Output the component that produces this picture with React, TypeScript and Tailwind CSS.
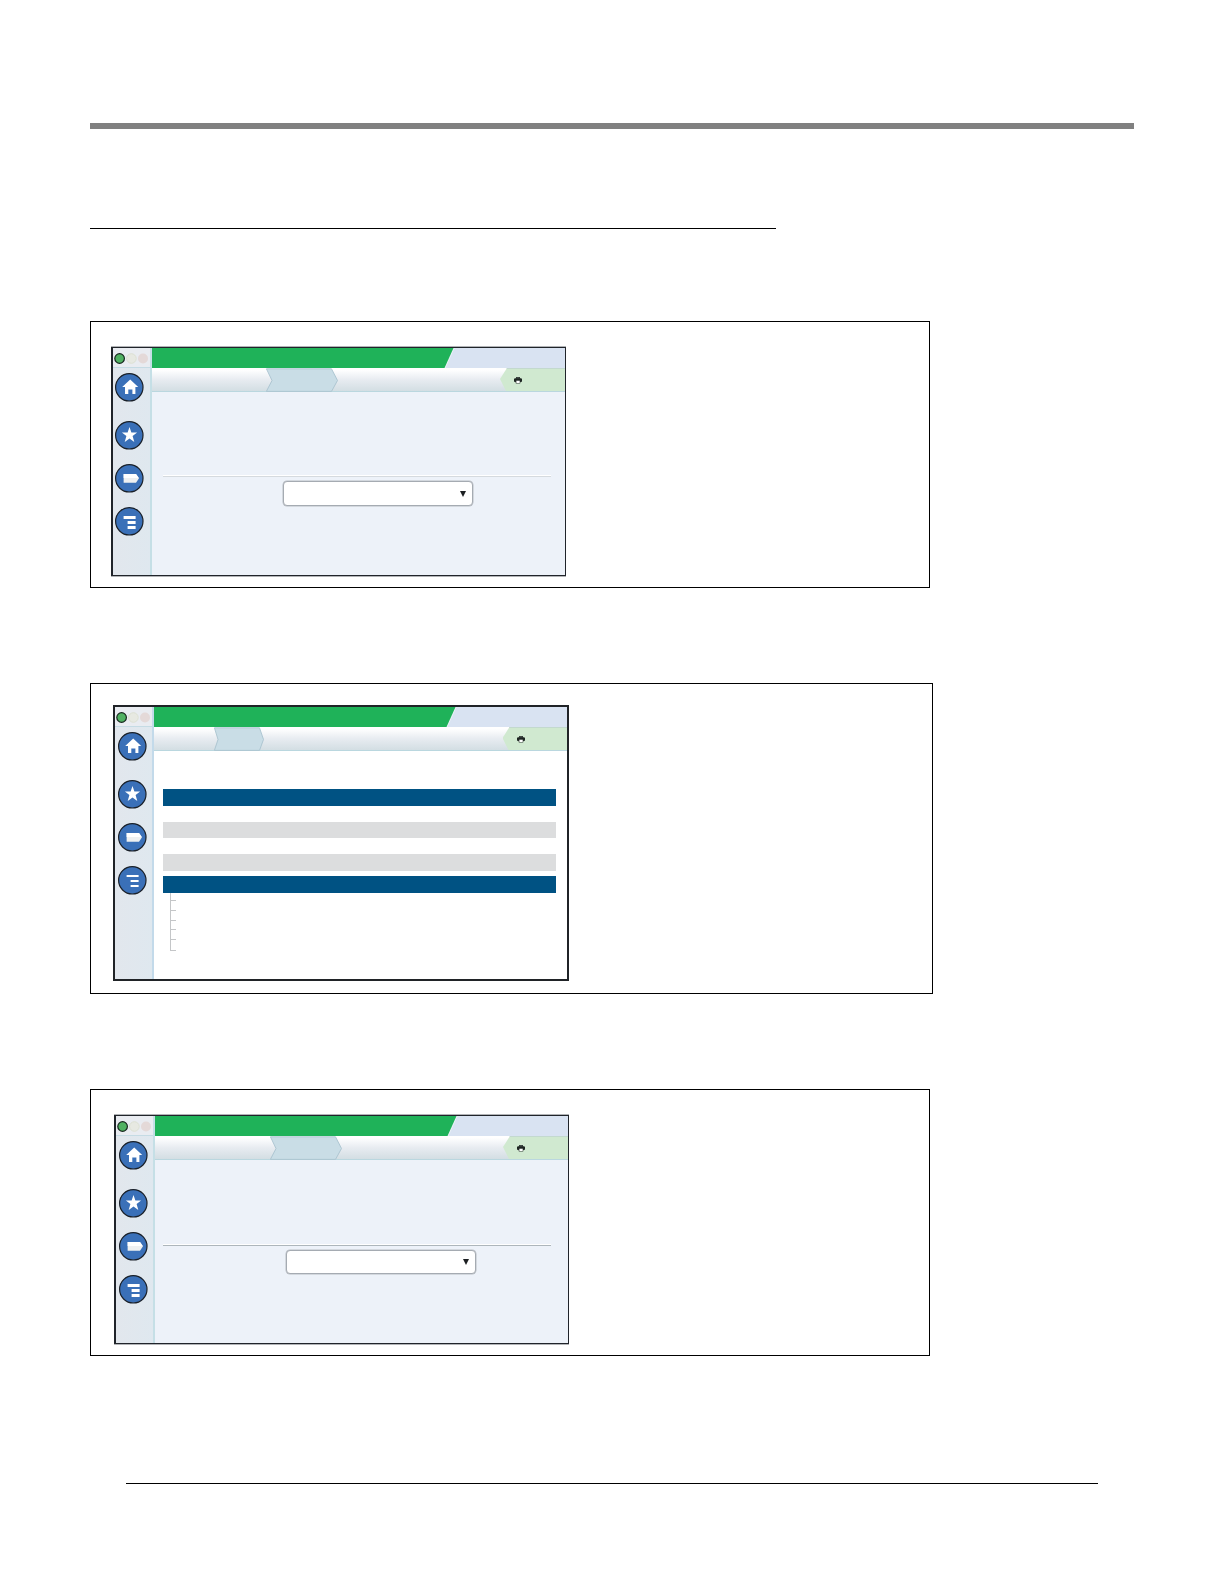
import type { ReactNode } from "react";
import clsx from "clsx";

type NavIconProps = {
  className?: string;
  children: ReactNode;
};

function NavIcon({ className, children }: NavIconProps) {
  return (
    <button type="button" className={clsx("block h-[29px] w-[29px]", className)}>
      <svg viewBox="0 0 29 29" className="block h-[29px] w-[29px]">
        <circle cx="14.3" cy="14.3" r="13.7" fill="#3a70b8" stroke="#1a2028" strokeWidth="1.2" />
        {children}
      </svg>
    </button>
  );
}

type SidebarProps = {
  className: string;
  navClassName: string;
  thinMenu?: boolean;
};

function Sidebar({ className, navClassName, thinMenu }: SidebarProps) {
  const bar = thinMenu ? 2 : 3;

  return (
    <aside
      className={clsx(
        "w-[39px] shrink-0 border-r-2 bg-linear-to-r from-[#e2e7ed] to-[#dfe8ef]",
        className,
      )}
    >
      <div className="h-5 border-b border-[#c5dbe4] bg-[#e9ecf1]">
        <svg viewBox="0 0 37 19" className="block h-[19px] w-[37px]">
          <circle cx="6.6" cy="10.5" r="4.8" fill="#50b162" stroke="#17271e" strokeWidth="1.2" />
          <circle cx="18.4" cy="10.5" r="4.8" fill="#e7e9e2" stroke="#dadfd0" strokeWidth="0.9" />
          <circle cx="30" cy="10.5" r="5" fill="#e4d9d8" />
        </svg>
      </div>
      <nav className={navClassName}>
        <NavIcon>
          <path d="M15.2 6.4 23.2 14H20.4V21H17.4V16.4H13.3V21H10V14H7.2Z" fill="#fff" />
        </NavIcon>
        <NavIcon className="mt-[19px]">
          <path
            d="m14.5 6 1.9 5.4h5.7l-4.5 3.5 1.7 6.1-4.8-3.5L9.7 21l1.7-6.1-4.5-3.5h5.7Z"
            fill="#fff"
          />
        </NavIcon>
        <NavIcon className="mt-[14px]">
          <path d="M8.6 9.9H21L24 14.3 21 18.8H8.6Z" fill="#eef0f1" />
          <path d="M8.6 9.9H21L23.7 14H8.6Z" fill="#fff" />
        </NavIcon>
        <NavIcon className="mt-[14px]">
          <g fill="#fff">
            <rect x="8.6" y="9" width="12" height={bar} />
            <rect x="12.6" y="14" width="8" height={bar} />
            <rect x="12.6" y="19" width="8" height={bar} />
          </g>
        </NavIcon>
      </nav>
    </aside>
  );
}

function PrinterIcon() {
  return (
    <svg viewBox="0 0 8 7" className="block h-[7px] w-2">
      <path d="M2 0H6V1.2H7.2L8 2V4.5L6.6 5.2H1.4L0 4.5V2L.8 1.2H2Z" fill="#1d2522" />
      <path d="M2.3.6H5.7V1.3H2.3Z" fill="#69716d" />
      <path d="M1.8 3.4H6.2V6.5H1.8Z" fill="#3a423e" />
      <path d="M2.4 3.7H5.7V5.9H2.4Z" fill="#fff" />
    </svg>
  );
}

type TopBarsProps = {
  crumbClassName: string;
  crumbWidth: number;
  notch: number;
  tabClassName: string;
};

function TopBars({ crumbClassName, crumbWidth, notch, tabClassName }: TopBarsProps) {
  const w = crumbWidth;

  return (
    <>
      <div className="h-5 bg-[#d9e3f2]">
        <div className="h-5 w-[302.5px] bg-[#eef3f8] [clip-path:polygon(0_0,100%_0,293.5px_100%,0_100%)]">
          <div className="h-5 w-[301.5px] bg-[#1fb259] [clip-path:polygon(0_0,100%_0,292.5px_100%,0_100%)]" />
        </div>
      </div>
      <div className="flex h-6 border-b border-[#bad7df] bg-linear-to-b from-white from-8% via-[#e8ecf1] via-50% to-[#d3dee3]">
        <svg
          viewBox={`0 0 ${w} 24`}
          className={clsx("-mb-px block h-6 shrink-0", crumbClassName)}
        >
          <path
            d={`M.4.8H${w - notch - 0.5}L${w - 0.5} 12.5 ${w - notch - 0.5} 23.4H.4L${notch} 12.5Z`}
            fill="#c9dde6"
            stroke="#a9c3cf"
            strokeWidth="0.9"
          />
        </svg>
        <div
          className={clsx(
            "ml-auto h-[23px] border-t border-[#c3d9cf] bg-[#d0e9d0] pt-2 pl-[14px] [clip-path:polygon(7px_0,100%_0,100%_100%,6px_100%,0_48%)]",
            tabClassName,
          )}
        >
          <PrinterIcon />
        </div>
      </div>
    </>
  );
}

type SelectScreenProps = {
  sidebarNavClassName: string;
  crumbClassName: string;
  ruleClassName: string;
  selectClassName: string;
};

function SelectScreen({
  sidebarNavClassName,
  crumbClassName,
  ruleClassName,
  selectClassName,
}: SelectScreenProps) {
  return (
    <div className="flex h-[229px] w-[455px] border border-l-2 border-[#20242a] shadow-[0_-1px_0_rgba(60,65,72,0.4),0_1px_0_rgba(60,65,72,0.4)]">
      <Sidebar className="border-[#c5dfe6]" navClassName={sidebarNavClassName} />
      <main className="min-w-0 flex-1 bg-[#edf2f9]">
        <TopBars
          crumbClassName={clsx("w-[72px]", crumbClassName)}
          crumbWidth={72}
          notch={6}
          tabClassName="w-[65px]"
        />
        <div className={clsx("w-[388px] border-t border-white", ruleClassName)} />
        <div
          className={clsx(
            "flex items-center justify-end rounded-[4px] border border-[#a5abb2] bg-white shadow-[0_0_0_0.5px_#b9bec4]",
            selectClassName,
          )}
        >
          <svg viewBox="0 0 6 6" className="h-1.5 w-1.5">
            <path d="M0 0H6L3 6Z" fill="#1c1f22" />
          </svg>
        </div>
      </main>
    </div>
  );
}

const treeRows = ["h-[7px]", "h-[10px]", "h-[10px]", "h-[9px]", "h-[10px]", "h-[11px]"];

function MenuTreeScreen() {
  return (
    <div className="flex h-[276px] w-[456px] border-2 border-[#202327]">
      <Sidebar className="border-[#c3daea]" navClassName="pt-[4.5px] pl-[2.5px]" thinMenu />
      <main className="min-w-0 flex-1 bg-white">
        <TopBars
          crumbClassName="ml-[60px] w-[50px]"
          crumbWidth={50}
          notch={4}
          tabClassName="w-[64.5px]"
        />
        <div className="mt-[38px] ml-[9px] w-[393px]">
          <div className="h-[17px] bg-[#005283]" />
          <div className="mt-4 h-4 bg-[#dcddde]" />
          <div className="mt-4 h-[17px] bg-[#dcddde]" />
          <div className="mt-[5px] h-[17px] bg-[#005283]" />
          <ul className="ml-[7px] w-1.5 border-l border-[#c4c6c8] pt-px">
            {treeRows.map((height, i) => (
              <li key={i} className={clsx("border-b border-[#c4c6c8]", height)} />
            ))}
          </ul>
        </div>
      </main>
    </div>
  );
}

export default function App() {
  return (
    <div className="h-[1584px] w-[1224px] bg-white px-[90px] pt-[123px] font-['Liberation_Sans',sans-serif]">
      <header>
        <div className="h-1.5 w-[1044px] bg-[#808080]" />
        <div className="mt-[99px] h-px w-[686px] bg-black" />
      </header>

      <section className="mt-[92px] h-[267px] w-[840px] border border-black pt-[25px] pl-5">
        <SelectScreen
          sidebarNavClassName="pt-[5px] pl-[2px]"
          crumbClassName="ml-[114px]"
          ruleClassName="mt-[83px] ml-[11px] border-b border-b-[#d5dade]"
          selectClassName="mt-1 ml-[131px] h-[25px] w-[190px] pr-1.5"
        />
      </section>

      <section className="mt-[95px] h-[311px] w-[843px] border border-black pt-[21px] pl-[22px]">
        <MenuTreeScreen />
      </section>

      <section className="mt-[95px] h-[267px] w-[840px] border border-black pt-[25px] pl-[23px]">
        <SelectScreen
          sidebarNavClassName="pt-[5px] pl-[2.5px]"
          crumbClassName="ml-[115px]"
          ruleClassName="mt-[84px] ml-2 border-b border-b-[#adb6bb]"
          selectClassName="mt-1 ml-[131px] h-6 w-[190px] pr-1.5"
        />
      </section>

      <footer className="mt-[127px] ml-9 h-px w-[972px] bg-black" />
    </div>
  );
}
